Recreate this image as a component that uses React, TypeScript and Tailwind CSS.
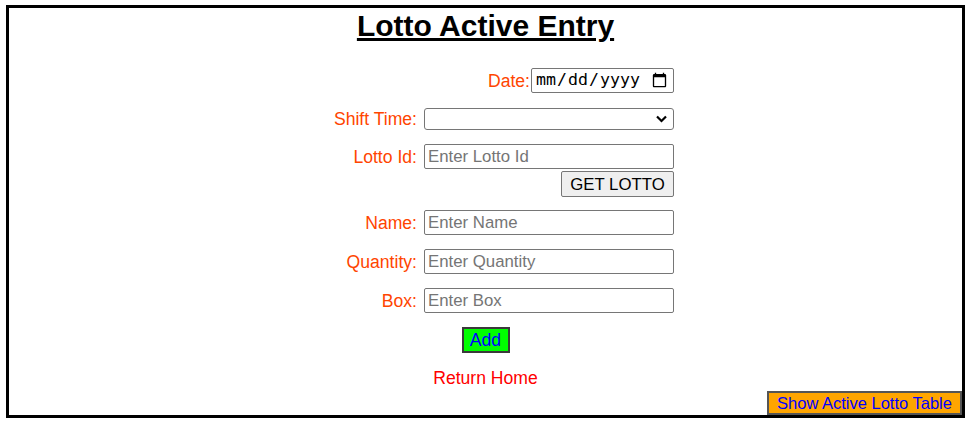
import React from 'react';

const labelCls = "text-[17.6px] text-[#ff4500] leading-[20px]";
const inputCls =
  "w-[250px] h-[25px] border border-[#767676] rounded-[2px] px-[3px] text-[16.8px] text-black placeholder:text-[#757575] bg-white outline-none";

interface FieldRowProps {
  label: string;
  placeholder: string;
  className?: string;
}

const FieldRow: React.FC<FieldRowProps> = ({ label, placeholder, className }) => (
  <div className={`flex items-center gap-[7px] ${className ?? ''}`}>
    <label className={labelCls}>{label}</label>
    <input type="text" placeholder={placeholder} className={inputCls} />
  </div>
);

const App: React.FC = () => {
  return (
    <div className="bg-white w-[973px] h-[424px] pt-[5px] pl-[6px]" style={{ fontFamily: '"Liberation Sans", Arial, sans-serif' }}>
      <div className="w-[959px] h-[413px] border-[3px] border-black flex flex-col">
        {/* Title */}
        <h1 className="text-center text-[30px] font-bold leading-[35px] underline text-black">
          Lotto Active Entry
        </h1>

        {/* Form rows */}
        <div className="w-[665px] flex flex-col items-end">
          <div className="mt-[25px] flex items-center gap-[1px]">
            <label className={labelCls}>Date:</label>
            <input
              type="date"
              className="w-[143px] h-[25px] border border-[#767676] rounded-[2px] px-[3px] text-[16.6px] text-black bg-white"
              style={{ fontFamily: '"DejaVu Sans Mono", monospace' }}
            />
          </div>

          <div className="mt-[15px] flex items-center gap-[7px]">
            <label className={labelCls}>Shift Time:</label>
            <div className="relative w-[250px] h-[22px]">
              <select className="appearance-none w-full h-full border border-[#767676] rounded-[3px] bg-white text-[16px] px-[3px]">
                <option value=""></option>
                <option value="morning">Morning</option>
                <option value="evening">Evening</option>
              </select>
              <svg
                className="absolute right-[7px] top-[7px] pointer-events-none"
                width="11"
                height="8"
                viewBox="0 0 11 8"
                fill="none"
              >
                <path d="M1 1.5 L5.5 6 L10 1.5" stroke="black" strokeWidth="2.2" />
              </svg>
            </div>
          </div>

          <FieldRow label="Lotto Id:" placeholder="Enter Lotto Id" className="mt-[14px]" />

          <button className="mt-[2px] h-[26px] w-[113px] bg-[#efefef] border border-[#767676] rounded-[2px] text-[16.8px] text-black">
            GET LOTTO
          </button>

          <FieldRow label="Name:" placeholder="Enter Name" className="mt-[13px]" />
          <FieldRow label="Quantity:" placeholder="Enter Quantity" className="mt-[14px]" />
          <FieldRow label="Box:" placeholder="Enter Box" className="mt-[14px]" />
        </div>

        {/* Add + return */}
        <div className="mt-[14px] flex justify-center">
          <button className="h-[26px] w-[48px] bg-[#00ff00] border-2 border-[#3a3a3a] text-[17.6px] text-[#0000ff] leading-[20px]">
            Add
          </button>
        </div>
        <div className="mt-[14px] text-center">
          <a href="#" className="text-[17.6px] leading-[20px] text-[#ff0000]">
            Return Home
          </a>
        </div>

        <button className="mt-auto self-end h-[26px] w-[195px] bg-[#ffa500] border-2 border-[#555555] text-[16.5px] text-[#0000ff] leading-[18px]">
          Show Active Lotto Table
        </button>
      </div>
    </div>
  );
};

export default App;
